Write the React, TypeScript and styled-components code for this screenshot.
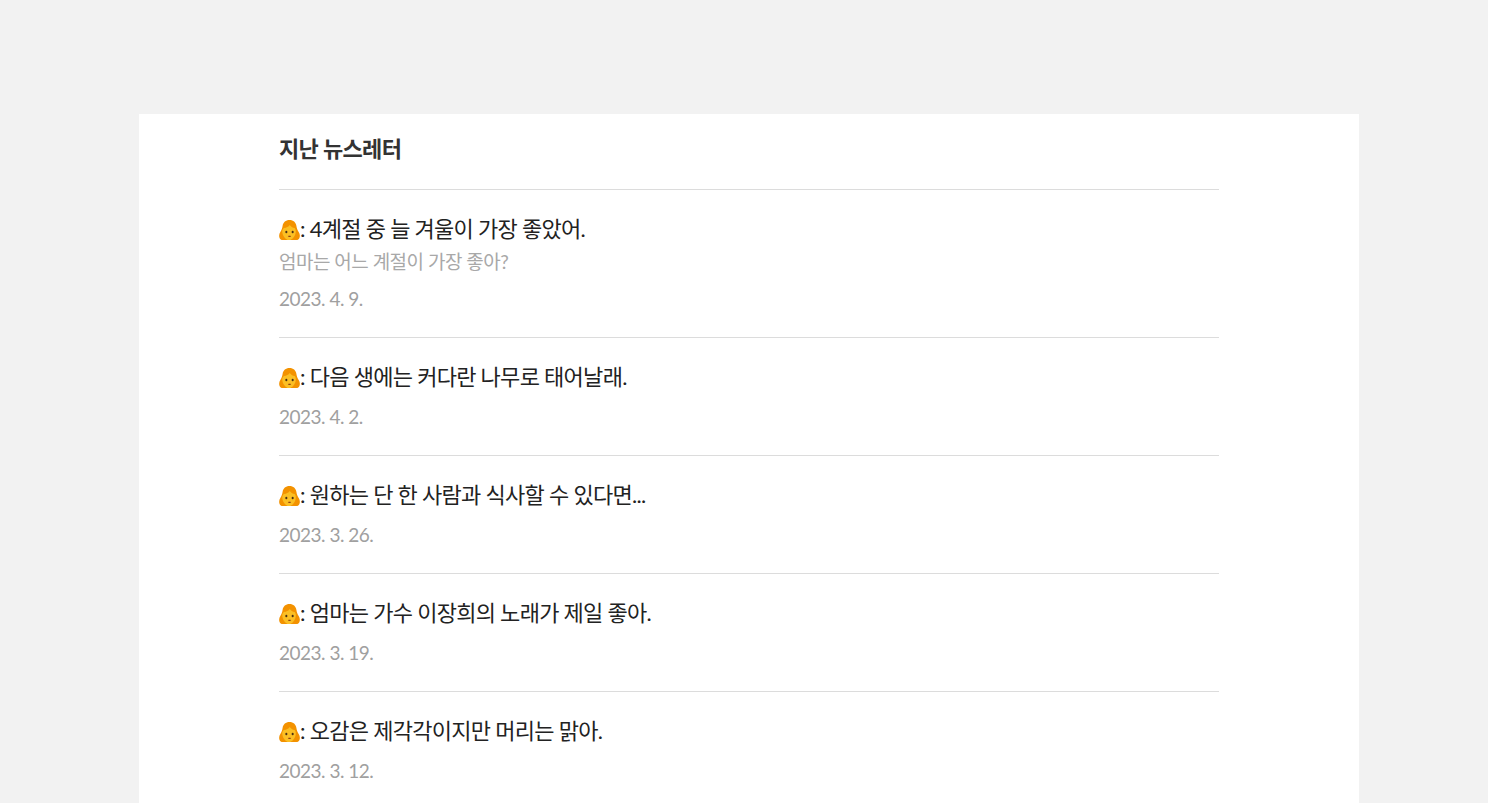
import React from "react"
import styled, { createGlobalStyle } from "styled-components"

const newsletters = [
  { title: "4계절 중 늘 겨울이 가장 좋았어.", subtitle: "엄마는 어느 계절이 가장 좋아?", date: "2023. 4. 9." },
  { title: "다음 생에는 커다란 나무로 태어날래.", date: "2023. 4. 2." },
  { title: "원하는 단 한 사람과 식사할 수 있다면...", date: "2023. 3. 26." },
  { title: "엄마는 가수 이장희의 노래가 제일 좋아.", date: "2023. 3. 19." },
  { title: "오감은 제각각이지만 머리는 맑아.", date: "2023. 3. 12." },
]

const WomanEmoji: React.FC = () => (
  <EmojiIcon viewBox="0 0 22 22" aria-hidden="true">
    {/* hair */}
    <path
      d="M11 .6C7 .6 4.400 3 3.800 6.600 3.400 9.300 2.800 11 1.400 13 .2 14.800-.2 17 .5 19c.5 1.600 1.800 2.500 3.500 2.500h14c1.700 0 3-.9 3.500-2.500.7-2 .3-4.200-.9-6-1.400-2-2-3.700-2.400-6.400C17.600 3 15 .6 11 .6z"
      fill="#f39200"
    />
    {/* face */}
    <path
      d="M3.400 12.300c0-1.500.7-2.700 1.700-3.500 2.800-.2 4.900-1.300 6.200-3.100 1 1.600 2.900 2.800 5.100 3.200.9.800 1.200 2 1.200 3.400 0 4.600-3.600 9.300-7.100 9.300s-7.100-4.700-7.100-9.300z"
      fill="#fbbf24"
    />
    <ellipse cx="7.700" cy="13" rx="1.100" ry="1.300" fill="#4a2f12" />
    <ellipse cx="14.300" cy="13" rx="1.100" ry="1.300" fill="#4a2f12" />
    <path d="M9.200 17.500c1.100-.7 2.500-.7 3.600 0-1 1.100-2.600 1.100-3.600 0z" fill="#8a3b12" />
  </EmojiIcon>
)

const App: React.FC = () => (
  <>
    <GlobalStyle />
    <Page>
      <Card>
        <Heading>지난 뉴스레터</Heading>
        <List>
          {newsletters.map((item) => (
            <Item key={item.date}>
              <ItemTitle>
                <WomanEmoji />: {item.title}
              </ItemTitle>
              {item.subtitle && <ItemSubtitle>{item.subtitle}</ItemSubtitle>}
              <ItemDate>{item.date}</ItemDate>
            </Item>
          ))}
        </List>
      </Card>
    </Page>
  </>
)

const GlobalStyle = createGlobalStyle`
  html, body {
    margin: 0;
    height: 100%;
    overflow: hidden;
    background: #f2f2f2;
    font-family: Lato, "Noto Sans CJK KR", sans-serif;
  }
`

const Page = styled.main`
  padding: 114px 0 0 139px;
`

const Card = styled.section`
  width: 940px;
  padding: 0 140px;
  background: #fff;
`

const Heading = styled.h2`
  margin: 0;
  height: 75.5px;
  box-sizing: border-box;
  padding-top: 18px;
  font-size: 22px;
  line-height: 33px;
  font-weight: 700;
  letter-spacing: -0.65px;
  color: #333;
  border-bottom: 1px solid #dcdcdc;
`

const List = styled.ul`
  list-style: none;
  margin: 0;
  padding: 0;
`

const Item = styled.li`
  padding: 23px 0 24px;
  border-bottom: 1px solid #dcdcdc;
`

const ItemTitle = styled.div`
  font-size: 22px;
  line-height: 32px;
  letter-spacing: -0.72px;
  color: #222;
`

const EmojiIcon = styled.svg`
  width: 21px;
  height: 22px;
  vertical-align: -4px;
`

const ItemSubtitle = styled.div`
  margin-top: 2px;
  font-size: 19px;
  line-height: 30px;
  letter-spacing: -0.5px;
  color: #a8a8a8;
`

const ItemDate = styled.div`
  margin-top: 10px;
  font-size: 19px;
  line-height: 28px;
  letter-spacing: -0.5px;
  color: #a0a0a0;

  ${ItemSubtitle} + & {
    margin-top: 8px;
  }
`

export default App
